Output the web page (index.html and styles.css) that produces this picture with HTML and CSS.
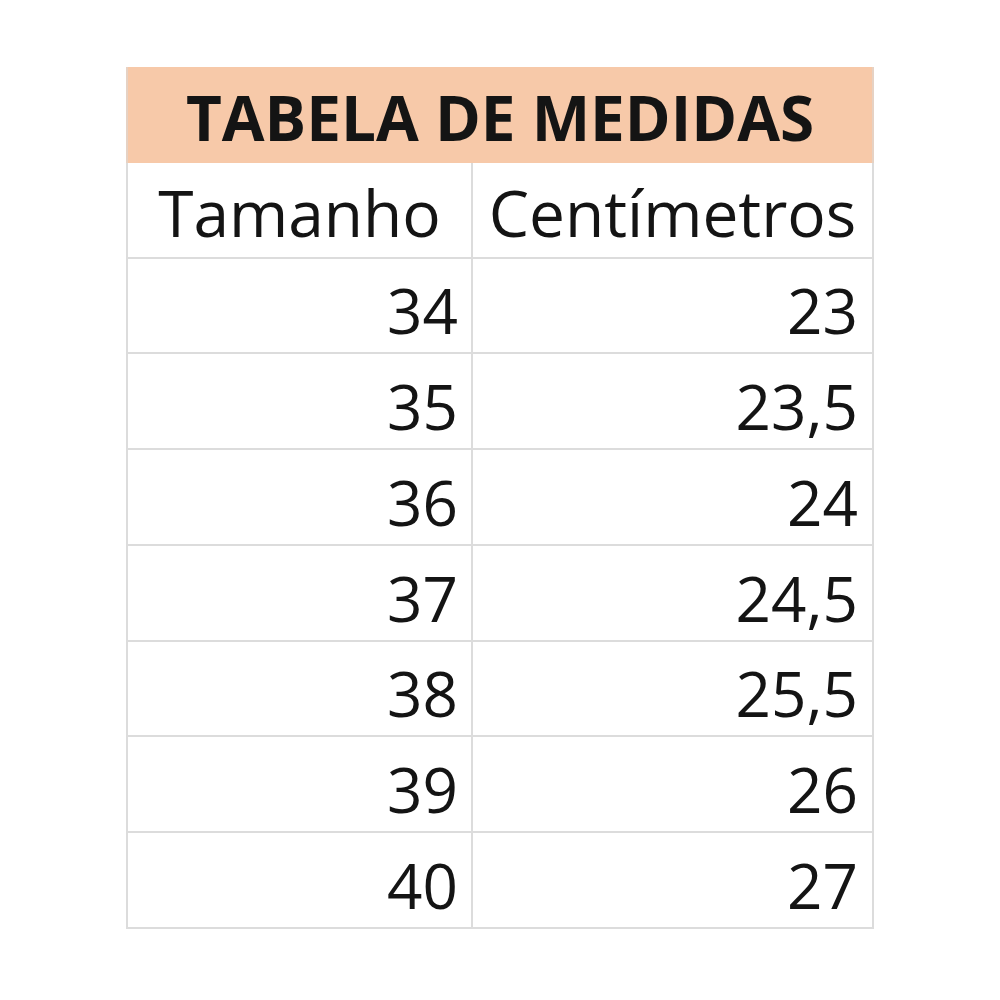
FILE: index.html
```html
<!DOCTYPE html>
<html lang="pt">
<head>
<meta charset="utf-8">
<title>Tabela de Medidas</title>
<link rel="stylesheet" href="styles.css">
</head>
<body>
<div class="sizes">
  <div class="title">TABELA DE MEDIDAS</div>
  <div class="cell head first">Tamanho</div>
  <div class="cell head">Centímetros</div>
  <div class="cell num first">34</div><div class="cell num">23</div>
  <div class="cell num first">35</div><div class="cell num">23,5</div>
  <div class="cell num first">36</div><div class="cell num">24</div>
  <div class="cell num first">37</div><div class="cell num">24,5</div>
  <div class="cell num first">38</div><div class="cell num">25,5</div>
  <div class="cell num first">39</div><div class="cell num">26</div>
  <div class="cell num first">40</div><div class="cell num">27</div>
</div>
</body>
</html>
```
FILE: styles.css
```css
html, body {
  margin: 0;
  padding: 0;
  background: #ffffff;
}
body {
  font-family: "Open Sans", "Noto Sans", sans-serif;
  color: #141414;
}
.sizes {
  margin: 67px 0 0 126px;
  width: 748px;
  display: grid;
  grid-template-columns: 347px 401px;
  grid-auto-rows: 95.75px;
}
.title {
  grid-column: 1 / span 2;
  box-sizing: border-box;
  background: #f7c9a9;
  border-left: 2px solid #e6d2c4;
  border-right: 2px solid #e6d2c4;
  font-size: 62px;
  line-height: 64px;
  font-weight: 700;
  display: flex;
  align-items: flex-end;
  justify-content: center;
  padding-bottom: 14px;
}
.cell {
  box-sizing: border-box;
  border-right: 2px solid #dcdcdc;
  border-bottom: 2px solid #dcdcdc;
  font-size: 64px;
  line-height: 64px;
  display: flex;
  align-items: flex-end;
}
.cell.first {
  border-left: 2px solid #dcdcdc;
}
.head {
  justify-content: center;
  padding-bottom: 12px;
}
.num {
  font-size: 62px;
  justify-content: flex-end;
  padding-bottom: 10px;
  padding-right: 13px;
}
.num:not(.first) {
  padding-right: 14px;
}
```
